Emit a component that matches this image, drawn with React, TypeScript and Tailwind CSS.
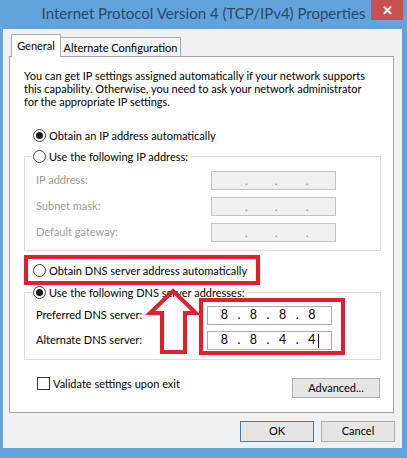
import React from "react";

function Radio({ checked }: { checked?: boolean }) {
  return (
    <span className="flex h-[13px] w-[13px] shrink-0 items-center justify-center rounded-full border border-[#3a3a3a] bg-white">
      {checked ? <span className="h-[7px] w-[7px] rounded-full bg-[#1a1a1a]" /> : null}
    </span>
  );
}

function DisabledIp() {
  return (
    <div className="flex h-[19px] w-[125px] items-center border border-[#c3c3c3] bg-[#f0f0f0] text-[12px] text-[#8a8a8a]">
      <span className="ml-[33px]">.</span>
      <span className="ml-[27px]">.</span>
      <span className="ml-[28px]">.</span>
    </div>
  );
}

function DnsInput({ parts, caret }: { parts: string[]; caret?: boolean }) {
  const cells = [parts[0], ".", parts[1], ".", parts[2], ".", parts[3]];
  return (
    <div className="flex h-[19px] w-[125px] items-center border border-[#abadb3] bg-white pl-[9px] text-[12.5px] leading-none text-black">
      {cells.map((c, i) => (
        <span key={i} className="w-[14.6px] text-center">
          {c}
        </span>
      ))}
      {caret ? <span className="-ml-[1px] h-[14px] w-px bg-black" /> : null}
    </div>
  );
}

export default function App() {
  return (
    <div className="flex h-[458px] w-[407px] flex-col overflow-hidden bg-[#62a3db] font-['Lato','Noto_Sans',sans-serif] text-[11px] text-black">
      {/* Title bar */}
      <div className="flex h-[29px] shrink-0 items-start">
        <div className="w-[36px]" />
        <div className="flex h-[27px] flex-1 items-center justify-center whitespace-nowrap text-[15px] text-[#2b4866]">
          Internet Protocol Version 4 (TCP/IPv4) Properties
        </div>
        <div className="mr-[4px] flex h-[20px] w-[32px] items-center justify-center bg-[#c75050] text-[13px] font-bold leading-none text-white">
          ✕
        </div>
      </div>

      {/* Client area */}
      <div className="ml-[3px] mr-[5px] flex h-[419px] flex-col bg-[#f0f0f0] pt-[5px]">
        {/* Tabs */}
        <div className="ml-[8px] flex h-[23px] items-end">
          <div className="relative z-10 flex h-[23px] w-[50px] items-start justify-center border border-b-0 border-[#adadad] bg-white pt-[3px]">
            General
          </div>
          <div className="flex h-[20px] w-[120px] items-start justify-center border border-l-0 border-[#adadad] bg-[#f5f5f5] pt-[2px]">
            Alternate Configuration
          </div>
        </div>

        {/* Panel */}
        <div className="relative ml-[6px] -mt-px flex h-[357px] w-[385px] flex-col border border-[#a5a5a5] bg-white">
          <div className="ml-[14px] mt-[12px] whitespace-nowrap leading-[13px]">
            <div>You can get IP settings assigned automatically if your network supports</div>
            <div>this capability. Otherwise, you need to ask your network administrator</div>
            <div>for the appropriate IP settings.</div>
          </div>

          <div className="ml-[23px] mt-[21px] flex h-[13px] items-center gap-[3px] leading-[13px]">
            <Radio checked />
            <span>Obtain an IP address automatically</span>
          </div>

          <fieldset className="ml-[14px] mt-[8px] w-[357px] border border-[#dcdcdc] pb-[8px]">
            <legend className="ml-[7px] flex h-[13px] items-center gap-[3px] bg-white pl-[1px] pr-[2px] leading-[13px]">
              <Radio />
              <span>Use the following IP address:</span>
            </legend>
            <div className="mt-[8px] flex flex-col gap-[7px] pl-[11px] text-[#9a9a9a]">
              <div className="flex h-[19px] items-center">
                <span className="w-[175px]">IP address:</span>
                <DisabledIp />
              </div>
              <div className="flex h-[19px] items-center">
                <span className="w-[175px]">Subnet mask:</span>
                <DisabledIp />
              </div>
              <div className="flex h-[19px] items-center">
                <span className="w-[175px]">Default gateway:</span>
                <DisabledIp />
              </div>
            </div>
          </fieldset>

          <div className="ml-[14px] mt-[4px] flex h-[30px] w-[236px] items-center gap-[3px] border-4 border-[#e1202b] pl-[5px] leading-[13px]">
            <Radio />
            <span>Obtain DNS server address automatically</span>
          </div>

          <fieldset className="ml-[14px] mt-[1px] w-[357px] border border-[#dcdcdc] pb-[4px]">
            <legend className="ml-[7px] flex h-[13px] items-center gap-[3px] bg-white pl-[1px] pr-[2px] leading-[13px]">
              <Radio checked />
              <span>Use the following DNS server addresses:</span>
            </legend>
            <div className="-mt-px flex pl-[11px]">
              <div className="mt-[8px] flex w-[163px] flex-col gap-[6px]">
                <div className="flex h-[19px] items-center">Preferred DNS server:</div>
                <div className="flex h-[19px] items-center">Alternate DNS server:</div>
              </div>
              <div className="flex h-[57px] w-[146px] flex-col gap-[6px] border-4 border-[#e1202b] pl-[4px] pt-[4px]">
                <DnsInput parts={["8", "8", "8", "8"]} />
                <DnsInput parts={["8", "8", "4", "4"]} caret />
              </div>
            </div>
          </fieldset>

          <div className="mt-[17px] flex items-start">
            <div className="ml-[27px] flex h-[13px] items-center gap-[3px] leading-[13px]">
              <span className="h-[13px] w-[13px] border border-[#3a3a3a] bg-white" />
              <span>Validate settings upon exit</span>
            </div>
            <button className="ml-auto mr-[13px] mt-[1px] flex h-[20px] w-[88px] items-center justify-center border border-[#adadad] bg-[#e5e5e5]">
              Advanced...
            </button>
          </div>

          {/* Annotation arrow */}
          <svg className="absolute left-[130px] top-[226px]" width="70" height="77" viewBox="0 0 70 77">
            <polygon
              points="33,8 56,30 45,30 45,69 22,69 22,30 10,30"
              fill="none"
              stroke="#e1202b"
              strokeWidth="4"
              strokeLinejoin="miter"
            />
          </svg>
        </div>

        {/* Bottom buttons */}
        <div className="mr-[7px] mt-[8px] flex justify-end gap-[7px]">
          <button className="flex h-[21px] w-[74px] items-center justify-center border border-[#3c7fb1] bg-[#e5e5e5]">
            OK
          </button>
          <button className="flex h-[21px] w-[74px] items-center justify-center border border-[#adadad] bg-[#e5e5e5]">
            Cancel
          </button>
        </div>
      </div>
    </div>
  );
}
